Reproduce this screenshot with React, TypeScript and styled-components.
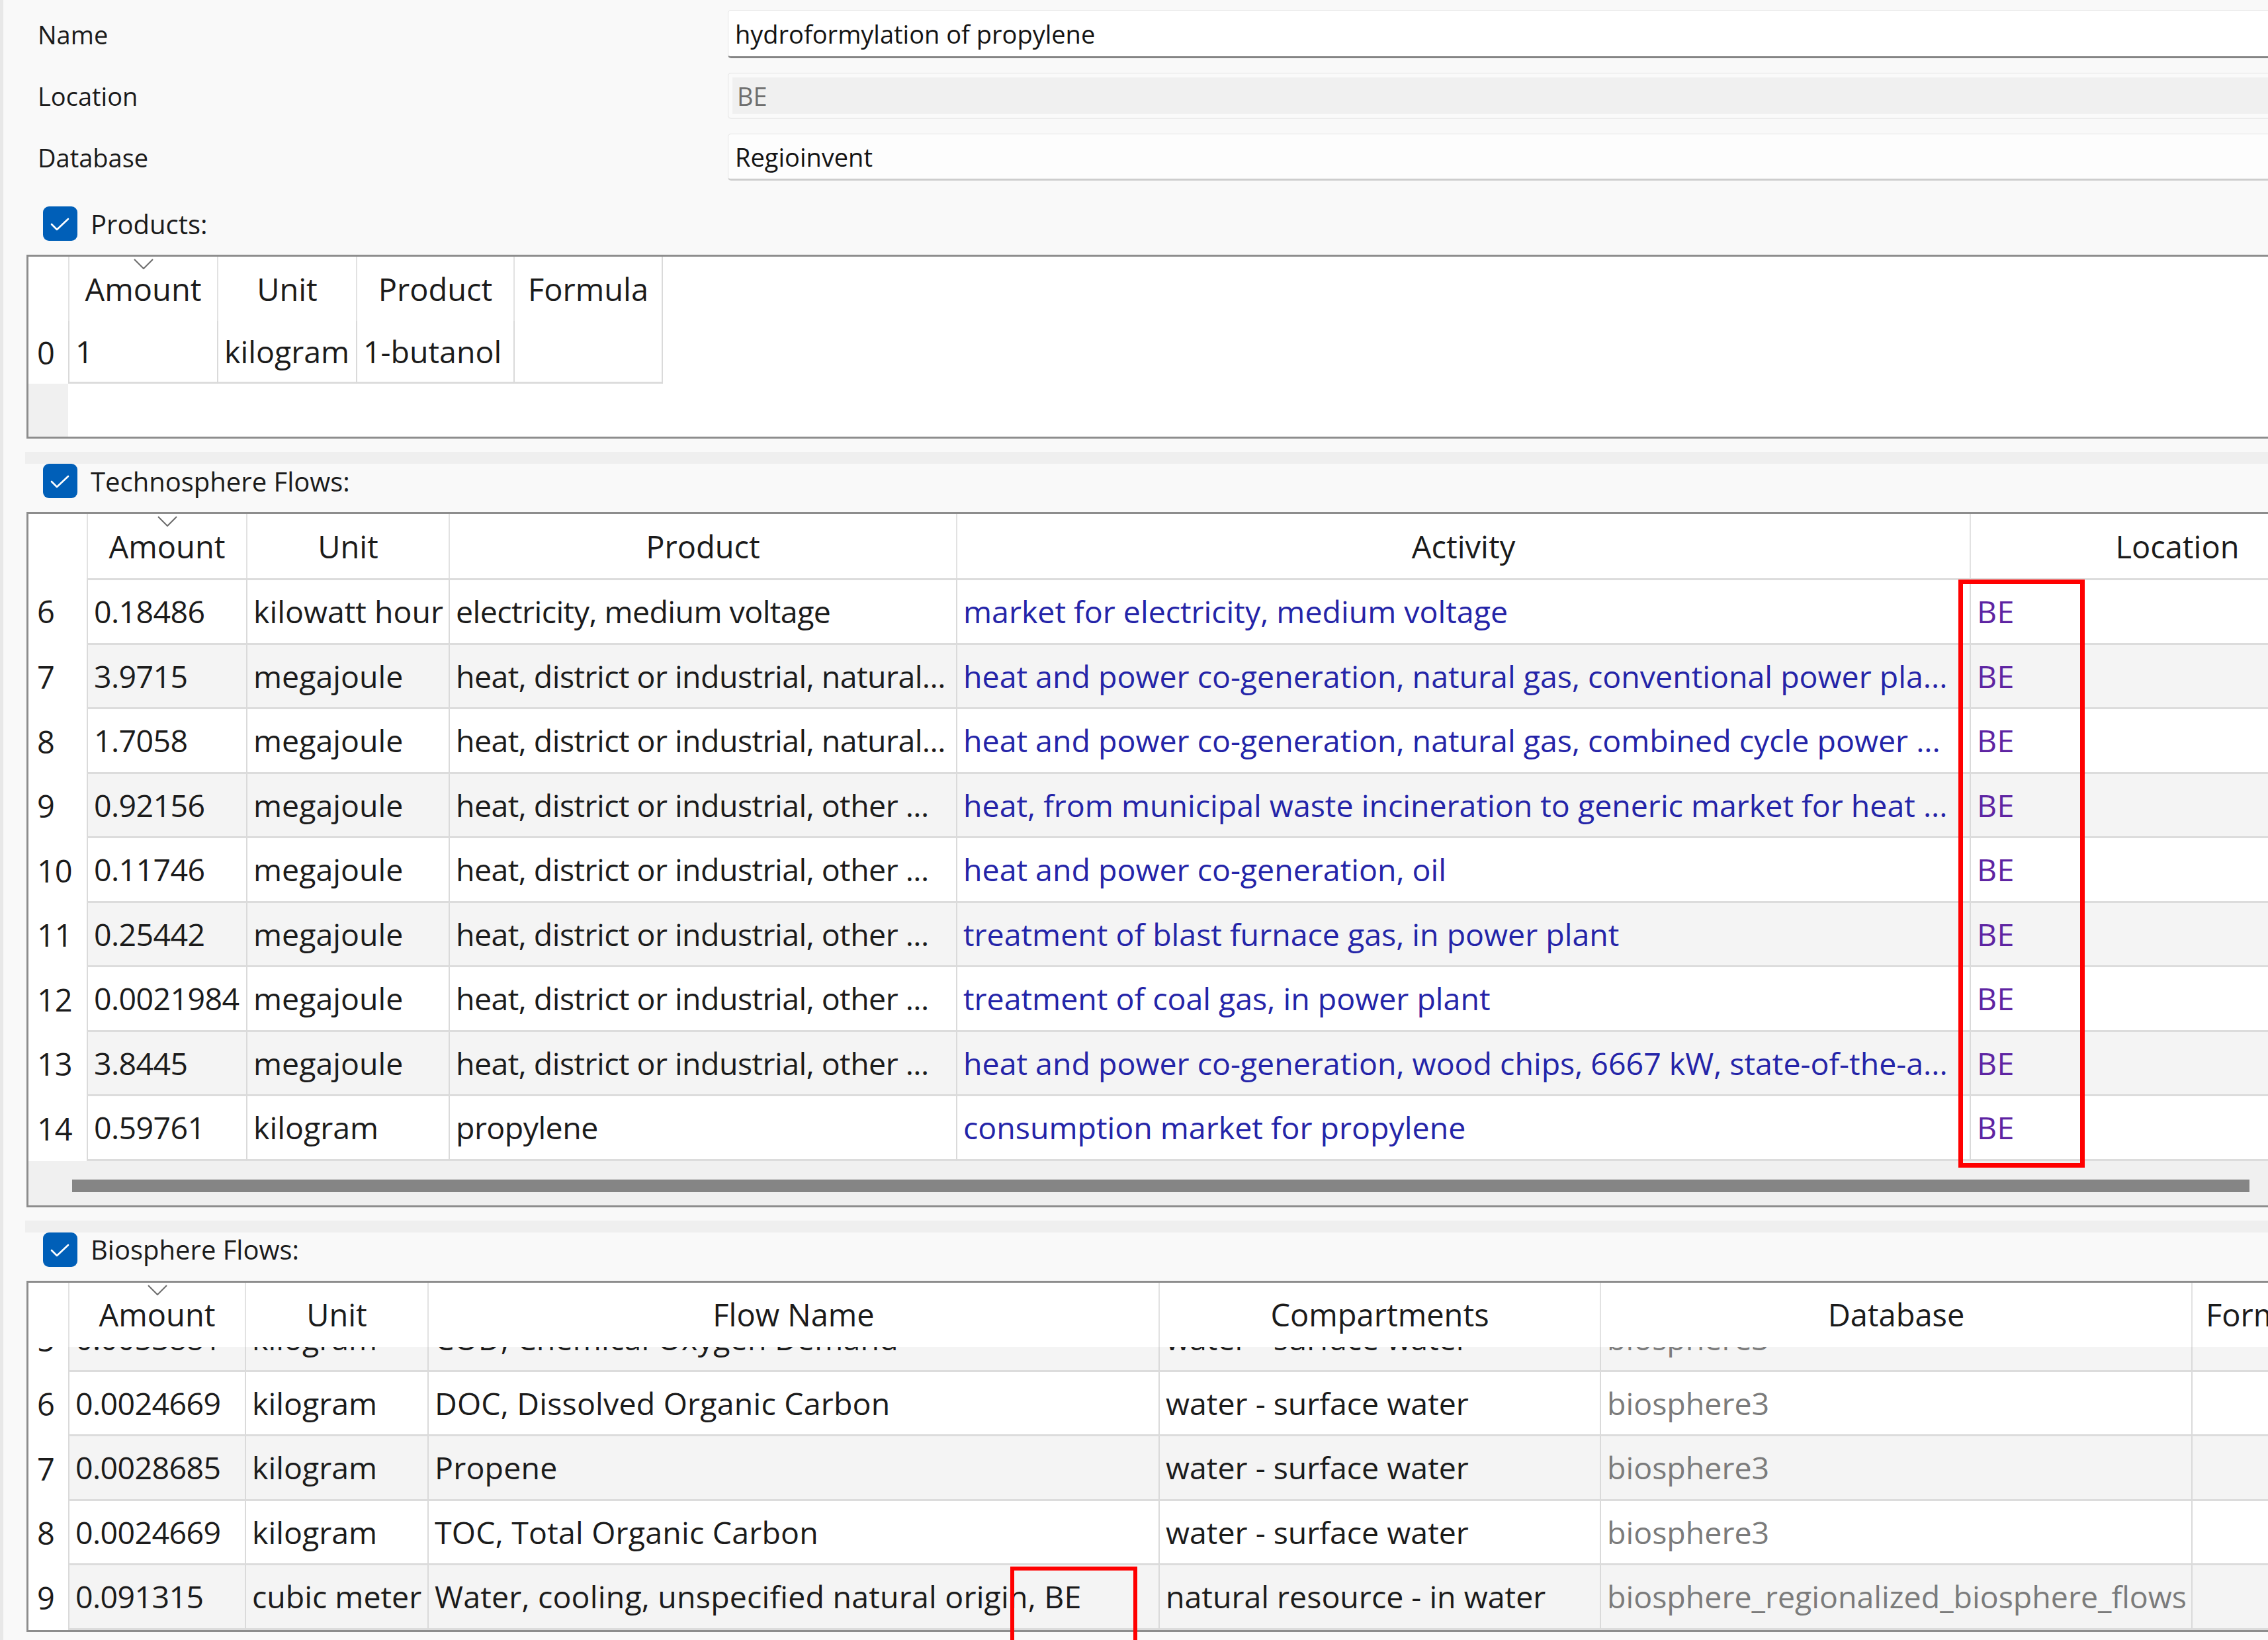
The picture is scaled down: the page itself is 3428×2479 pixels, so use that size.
import React from "react";
import styled, { createGlobalStyle } from "styled-components";

const Global = createGlobalStyle`
  html, body {
    margin: 0;
    padding: 0;
    background: #f9f9f9;
    overflow: hidden;
  }
  body {
    font-family: "Open Sans", "Noto Sans", sans-serif;
    color: #1b1b1b;
  }
  * { box-sizing: border-box; }
`;

const Page = styled.div`
  width: 3428px;
  height: 2479px;
  overflow: hidden;
  background: #f9f9f9;
  border-left: 5px solid #e8e8e8;
  padding: 15px 0 0 35px;
  display: flex;
  flex-direction: column;
`;

/* ---------- top form ---------- */

const Form = styled.div`
  display: grid;
  grid-template-columns: 1043px 2400px;
  grid-template-rows: 73px 70px 71px;
  row-gap: 22px;
  padding-left: 17px;
  align-items: center;
`;

const Label = styled.div`
  font-size: 38px;
  color: #1b1b1b;
`;

type FieldKind = "edit" | "disabled" | "plain";

const Field = styled.div<{ $kind: FieldKind }>`
  height: 100%;
  display: flex;
  align-items: center;
  font-size: 38px;
  border-radius: 5px;
  border: 1px solid #e4e4e4;
  border-bottom: ${(p) =>
    p.$kind === "edit" ? "3px solid #858585" : p.$kind === "plain" ? "3px solid #cdcdcd" : "2px solid #ececec"};
  background: ${(p) => (p.$kind === "edit" ? "#ffffff" : p.$kind === "plain" ? "#fdfdfd" : "#f0f0f0")};
  box-shadow: ${(p) => (p.$kind === "disabled" ? "inset 0 0 0 6px #fafafa" : "none")};
  color: ${(p) => (p.$kind === "disabled" ? "#6e6e6e" : "#141414")};
  padding-left: ${(p) => (p.$kind === "disabled" ? "13px" : "10px")};
`;

/* ---------- section header ---------- */

const Band = styled.div`
  height: 18px;
  margin: 20px 0 0 -2px;
  background: #efefef;
`;

const SectionHead = styled.div<{ $top: number }>`
  display: flex;
  align-items: center;
  height: 52px;
  margin-top: ${(p) => p.$top}px;
  padding-left: 25px;
  margin-bottom: 21px;
`;

const CheckBox = styled.span`
  width: 52px;
  height: 52px;
  border-radius: 9px;
  background: #005fb8;
  display: inline-flex;
  align-items: center;
  justify-content: center;
  flex-shrink: 0;
`;

const SectionTitle = styled.span`
  font-size: 40px;
  margin-left: 20px;
  color: #1b1b1b;
`;

function Check() {
  return (
    <CheckBox>
      <svg width="52" height="52" viewBox="0 0 52 52">
        <polyline points="13,27 21,35 38,19" fill="none" stroke="#ffffff" strokeWidth="2.6" strokeLinecap="round" strokeLinejoin="round" />
      </svg>
    </CheckBox>
  );
}

/* ---------- tables ---------- */

const Frame = styled.div<{ $w: number }>`
  position: relative;
  width: ${(p) => p.$w}px;
  flex-shrink: 0;
  border: 3px solid #8d8d8d;
  border-right: none;
  background: #ffffff;
`;

const Row = styled.div<{ $cols: string; $h: number }>`
  display: grid;
  grid-template-columns: ${(p) => p.$cols};
  height: ${(p) => p.$h}px;
`;

const HeadCell = styled.div<{ $lead?: boolean }>`
  position: relative;
  display: flex;
  align-items: center;
  justify-content: center;
  background: #ffffff;
  border-left: ${(p) => (p.$lead ? "none" : "2px solid #e2e2e2")};
  font-size: 47px;
  white-space: nowrap;
  overflow: hidden;
  color: #1b1b1b;
`;

const SortMark = styled.svg`
  position: absolute;
  top: 3px;
  left: 50%;
  margin-left: -15px;
`;

const NumCell = styled.div`
  display: flex;
  align-items: center;
  padding-left: 13px;
  background: #ffffff;
  font-size: 47px;
  color: #1b1b1b;
  white-space: nowrap;
`;

type Tone = "text" | "link" | "loc" | "muted";
const toneColor: Record<Tone, string> = {
  text: "#1b1b1b",
  link: "#2424a8",
  loc: "#5e24a2",
  muted: "#7b7b7b",
};

type ColSpec = { tone: Tone; track: number };

const Cell = styled.div<{ $alt: boolean; $top?: boolean; $tone: Tone; $track: number }>`
  display: flex;
  align-items: center;
  min-width: 0;
  padding: 0 0 0 9px;
  background: ${(p) => (p.$alt ? "#f4f4f4" : "#ffffff")};
  border-left: 2px solid #dadada;
  border-bottom: 3px solid #dcdcdc;
  border-top: ${(p) => (p.$top ? "3px solid #dcdcdc" : "none")};
  color: ${(p) => toneColor[p.$tone]};
  font-size: 46.5px;
  letter-spacing: ${(p) => p.$track}px;
`;

const CellText = styled.span`
  display: block;
  min-width: 0;
  white-space: nowrap;
  overflow: hidden;
  text-overflow: ellipsis;
`;

const Filler = styled.div<{ $edge: boolean }>`
  background: #ffffff;
  border-left: ${(p) => (p.$edge ? "2px solid #dadada" : "none")};
`;

const EmptyArea = styled.div<{ $cols: string }>`
  display: grid;
  grid-template-columns: ${(p) => p.$cols};
  height: 80px;
`;

const GreyNum = styled.div`
  background: #f0f0f0;
`;

const White = styled.div`
  background: #ffffff;
`;

const ScrollArea = styled.div`
  height: 67px;
  background: #f0f0f0;
  padding: 28px 0 0 66px;
`;

const ScrollThumb = styled.div`
  width: 3291px;
  height: 19px;
  background: #858585;
`;

const Viewport = styled.div<{ $h: number }>`
  height: ${(p) => p.$h}px;
  overflow: hidden;
`;

const Scrolled = styled.div<{ $offset: number }>`
  margin-top: ${(p) => -p.$offset}px;
`;

const Highlight = styled.div<{ $x: number; $y: number; $w: number; $h: number; $t: number }>`
  position: absolute;
  left: ${(p) => p.$x}px;
  top: ${(p) => p.$y}px;
  width: ${(p) => p.$w}px;
  height: ${(p) => p.$h}px;
  border: ${(p) => p.$t}px solid #ff0000;
  pointer-events: none;
  z-index: 5;
`;

type DataRow = { n: number; cells: string[] };

function Chevron() {
  return (
    <SortMark width="30" height="16" viewBox="0 0 30 16">
      <polyline points="1,1 15,15 29,1" fill="none" stroke="#6b6b6b" strokeWidth="2" />
    </SortMark>
  );
}

function Header({ cols, labels, filler }: { cols: string; labels: string[]; filler?: boolean }) {
  return (
    <Row $cols={cols} $h={97}>
      <HeadCell $lead />
      {labels.map((l, i) => (
        <HeadCell key={l + i}>
          {i === 0 && <Chevron />}
          {l}
        </HeadCell>
      ))}
      {filler && <Filler $edge />}
    </Row>
  );
}

function Rows({
  cols,
  rows,
  specs,
  h,
  firstRule,
  filler,
}: {
  cols: string;
  rows: DataRow[];
  specs: ColSpec[];
  h: number;
  firstRule?: boolean;
  filler?: boolean;
}) {
  return (
    <>
      {rows.map((r, idx) => {
        const top = firstRule && idx === 0;
        return (
          <Row key={r.n} $cols={cols} $h={top ? h + 3 : h}>
            <NumCell>{r.n}</NumCell>
            {r.cells.map((c, i) => {
              const s = specs[i] || { tone: "text", track: 0 };
              return (
                <Cell key={i} $alt={r.n % 2 === 1} $top={top} $tone={s.tone} $track={s.track}>
                  <CellText>{c}</CellText>
                </Cell>
              );
            })}
            {filler && <Filler $edge />}
          </Row>
        );
      })}
    </>
  );
}

/* ---------- data ---------- */

const productCols = "60px 225px 210px 238px 224px 1fr";
const productRows: DataRow[] = [{ n: 0, cells: ["1", "kilogram", "1-butanol", ""] }];
const productSpecs: ColSpec[] = [
  { tone: "text", track: -0.6 },
  { tone: "text", track: 0 },
  { tone: "text", track: 0 },
  { tone: "text", track: 0 },
];

const techCols = "88px 241px 306px 767px 1532px 626px 1fr";
const techRows: DataRow[] = [
  { n: 6, cells: ["0.18486", "kilowatt hour", "electricity, medium voltage", "market for electricity, medium voltage", "BE", ""] },
  { n: 7, cells: ["3.9715", "megajoule", "heat, district or industrial, natural...", "heat and power co-generation, natural gas, conventional power pla...", "BE", ""] },
  { n: 8, cells: ["1.7058", "megajoule", "heat, district or industrial, natural...", "heat and power co-generation, natural gas, combined cycle power ...", "BE", ""] },
  { n: 9, cells: ["0.92156", "megajoule", "heat, district or industrial, other ...", "heat, from municipal waste incineration to generic market for heat ...", "BE", ""] },
  { n: 10, cells: ["0.11746", "megajoule", "heat, district or industrial, other ...", "heat and power co-generation, oil", "BE", ""] },
  { n: 11, cells: ["0.25442", "megajoule", "heat, district or industrial, other ...", "treatment of blast furnace gas, in power plant", "BE", ""] },
  { n: 12, cells: ["0.0021984", "megajoule", "heat, district or industrial, other ...", "treatment of coal gas, in power plant", "BE", ""] },
  { n: 13, cells: ["3.8445", "megajoule", "heat, district or industrial, other ...", "heat and power co-generation, wood chips, 6667 kW, state-of-the-a...", "BE", ""] },
  { n: 14, cells: ["0.59761", "kilogram", "propylene", "consumption market for propylene", "BE", ""] },
];
const techSpecs: ColSpec[] = [
  { tone: "text", track: -0.6 },
  { tone: "text", track: 0 },
  { tone: "text", track: -0.55 },
  { tone: "link", track: 0 },
  { tone: "loc", track: 0.5 },
  { tone: "text", track: 0 },
];

const bioCols = "60px 267px 276px 1105px 667px 894px 224px 1fr";
const bioRows: DataRow[] = [
  { n: 5, cells: ["0.0053881", "kilogram", "COD, Chemical Oxygen Demand", "water - surface water", "biosphere3", ""] },
  { n: 6, cells: ["0.0024669", "kilogram", "DOC, Dissolved Organic Carbon", "water - surface water", "biosphere3", ""] },
  { n: 7, cells: ["0.0028685", "kilogram", "Propene", "water - surface water", "biosphere3", ""] },
  { n: 8, cells: ["0.0024669", "kilogram", "TOC, Total Organic Carbon", "water - surface water", "biosphere3", ""] },
  { n: 9, cells: ["0.091315", "cubic meter", "Water, cooling, unspecified natural origin, BE", "natural resource - in water", "biosphere_regionalized_biosphere_flows", ""] },
];
const bioSpecs: ColSpec[] = [
  { tone: "text", track: -0.6 },
  { tone: "text", track: 0 },
  { tone: "text", track: 0.2 },
  { tone: "text", track: 0 },
  { tone: "muted", track: 0 },
  { tone: "text", track: 0 },
];

export default function App() {
  return (
    <>
      <Global />
      <Page>
        <Form>
          <Label>Name</Label>
          <Field $kind="edit">hydroformylation of propylene</Field>
          <Label>Location</Label>
          <Field $kind="disabled">BE</Field>
          <Label>Database</Label>
          <Field $kind="plain">Regioinvent</Field>
        </Form>

        <SectionHead $top={39}>
          <Check />
          <SectionTitle>Products:</SectionTitle>
        </SectionHead>
        <Frame $w={3500}>
          <Row $cols={productCols} $h={97}>
            <HeadCell $lead />
            {["Amount", "Unit", "Product", "Formula"].map((l, i) => (
              <HeadCell key={l}>
                {i === 0 && <Chevron />}
                {l}
              </HeadCell>
            ))}
            <Filler $edge />
          </Row>
          <Rows cols={productCols} rows={productRows} specs={productSpecs} h={95} filler />
          <EmptyArea $cols="60px 1fr">
            <GreyNum />
            <White />
          </EmptyArea>
        </Frame>

        <Band />
        <SectionHead $top={0}>
          <Check />
          <SectionTitle>Technosphere Flows:</SectionTitle>
        </SectionHead>
        <Frame $w={3700}>
          <Header cols={techCols} labels={["Amount", "Unit", "Product", "Activity", "Location", ""]} />
          <Rows cols={techCols} rows={techRows} specs={techSpecs} h={97.5} firstRule />
          <ScrollArea>
            <ScrollThumb />
          </ScrollArea>
          <Highlight $x={2917} $y={99} $w={191} $h={889} $t={7} />
        </Frame>

        <Band />
        <SectionHead $top={0}>
          <Check />
          <SectionTitle>Biosphere Flows:</SectionTitle>
        </SectionHead>
        <Frame $w={3700}>
          <Header cols={bioCols} labels={["Amount", "Unit", "Flow Name", "Compartments", "Database", "Formula", ""]} />
          <Viewport $h={428}>
            <Scrolled $offset={59.5}>
              <Rows cols={bioCols} rows={bioRows} specs={bioSpecs} h={97.5} />
            </Scrolled>
          </Viewport>
          <Highlight $x={1484} $y={429} $w={192} $h={160} $t={6} />
        </Frame>
      </Page>
    </>
  );
}
